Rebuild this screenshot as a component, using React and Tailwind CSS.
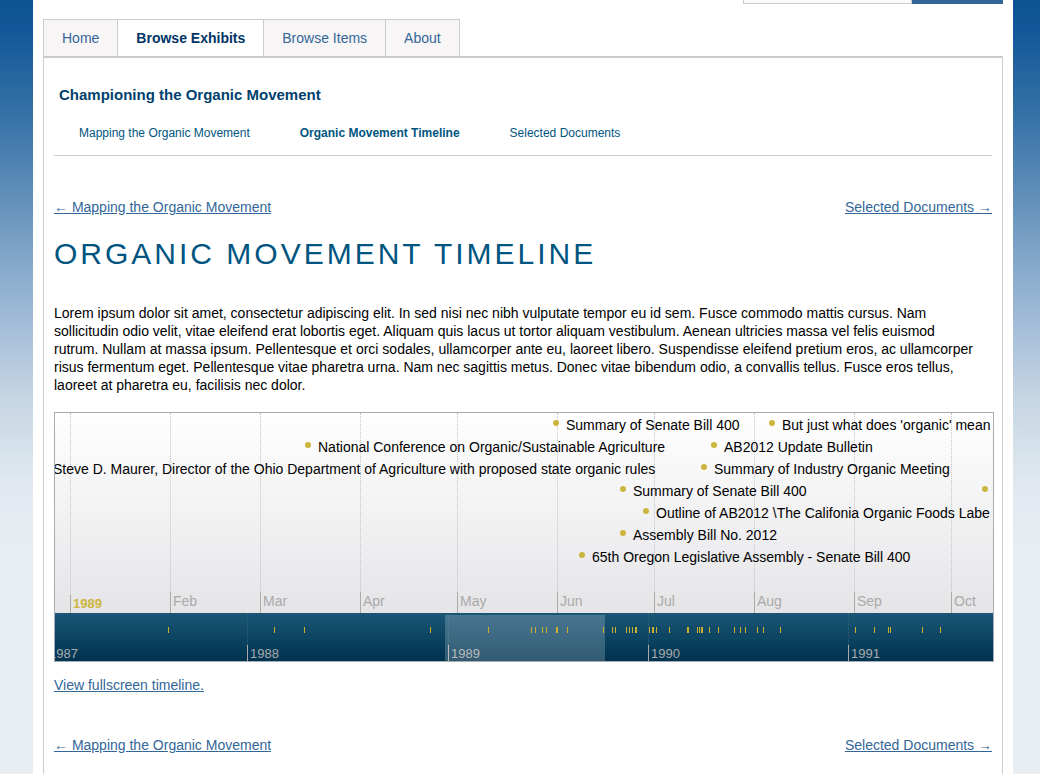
const tabs = [
  { label: "Home" },
  { label: "Browse Exhibits", active: true },
  { label: "Browse Items" },
  { label: "About" },
];

const sections = [
  { label: "Mapping the Organic Movement" },
  { label: "Organic Movement Timeline", active: true },
  { label: "Selected Documents" },
];

// Positions are pixel offsets along the time axis of each band.
const months = [
  { x: 115, label: "Feb" },
  { x: 205, label: "Mar" },
  { x: 305, label: "Apr" },
  { x: 402, label: "May" },
  { x: 502, label: "Jun" },
  { x: 599, label: "Jul" },
  { x: 699, label: "Aug" },
  { x: 799, label: "Sep" },
  { x: 896, label: "Oct" },
];

const years = [
  { x: -9, label: "1987" },
  { x: 192, label: "1988" },
  { x: 393, label: "1989" },
  { x: 593, label: "1990" },
  { x: 793, label: "1991" },
];

const events = [
  { x: 498, row: 0, label: "Summary of Senate Bill 400" },
  { x: 714, row: 0, label: "But just what does 'organic' mean" },
  { x: 250, row: 1, label: "National Conference on Organic/Sustainable Agriculture" },
  { x: 656, row: 1, label: "AB2012 Update Bulletin" },
  {
    x: -15,
    row: 2,
    label: "Steve D. Maurer, Director of the Ohio Department of Agriculture with proposed state organic rules",
  },
  { x: 646, row: 2, label: "Summary of Industry Organic Meeting" },
  { x: 565, row: 3, label: "Summary of Senate Bill 400" },
  { x: 927, row: 3, label: "" },
  { x: 588, row: 4, label: "Outline of AB2012 \\The Califonia Organic Foods Labe" },
  { x: 565, row: 5, label: "Assembly Bill No. 2012" },
  { x: 524, row: 6, label: "65th Oregon Legislative Assembly - Senate Bill 400" },
];

const ticks = [
  113, 219, 249, 375, 433, 476, 480, 487, 491, 501, 502, 512, 548, 557, 560,
  571, 574, 577, 580, 581, 594, 597, 598, 601, 614, 632, 633, 642, 644, 646,
  647, 654, 663, 679, 685, 690, 702, 708, 725, 800, 819, 833, 835, 867, 885,
];

const link = "text-[#336699] underline";

function SectionLinks() {
  return (
    <div className="flex justify-between leading-[18px]">
      <a href="#mapping" className={link}>← Mapping the Organic Movement</a>
      <a href="#documents" className={link}>Selected Documents →</a>
    </div>
  );
}

function Timeline() {
  return (
    <div className="box-content w-full overflow-hidden border border-[#a9a9b2] whitespace-nowrap">
      <div className="relative h-[200px] overflow-hidden bg-linear-to-b from-white to-[#e5e4e7]">
        <div className="absolute inset-y-0 left-[15px] border-l border-dotted border-[#c4c4c4]" />
        <div className="absolute bottom-0 left-[15px] h-[18px] border-l border-[#aaaaaa] pl-[2px] text-[13px] leading-[18px] font-bold text-[#ccb53d]">
          1989
        </div>
        {months.map((m) => (
          <div key={m.label}>
            <div className="absolute inset-y-0 border-l border-dotted border-[#c4c4c4]" style={{ left: m.x }} />
            <div
              className="absolute bottom-0 h-[21px] border-l border-[#aaaaaa] pl-[2px] leading-[18px] text-[#aaaaaa]"
              style={{ left: m.x }}
            >
              {m.label}
            </div>
          </div>
        ))}
        {events.map((e) => (
          <div
            key={e.x + "-" + e.row}
            className="absolute flex gap-[7px] leading-[18px]"
            style={{ left: e.x, top: 3 + e.row * 22 }}
          >
            <span className="mt-1 size-[6px] shrink-0 rounded-full bg-[#ccb53d]" />
            <span>{e.label}</span>
          </div>
        ))}
      </div>
      <div className="relative h-12 overflow-hidden bg-linear-to-b from-[#1b5676] to-[#003350]">
        {years.map((y) => (
          <div key={y.label}>
            <div className="absolute inset-y-0 border-l border-dotted border-[#345f78]" style={{ left: y.x }} />
            <div
              className="absolute bottom-0 h-4 border-l border-[#aaaaaa] pl-[2px] text-[13px] leading-[18px] text-[#aaaaaa]"
              style={{ left: y.x }}
            >
              {y.label}
            </div>
          </div>
        ))}
        <div className="absolute top-[2px] bottom-0 left-[390px] w-[160px] bg-white/20" />
        {ticks.map((x) => (
          <div key={x} className="absolute top-[14px] h-[6px] w-px bg-[#ccb02a]" style={{ left: x }} />
        ))}
      </div>
    </div>
  );
}

export default function App() {
  return (
    <div
      className="flex min-h-screen flex-col bg-[linear-gradient(to_bottom,#0c5492_0px,#13589a_30px,#2f6da3_100px,#5083b2_165px,#7ba2c6_245px,#a4bdd8_325px,#c6d6e3_400px,#d6e2ea_450px,#e5eaf3_500px,#e8edf1_550px,#e9eef2_774px)] pr-[27px] pl-[33px] text-sm text-black"
      style={{ fontFamily: '"Liberation Sans", Arial, sans-serif' }}
    >
      <div className="flex grow flex-col bg-white px-[10px]">
        <form className="flex h-1 items-end justify-end overflow-hidden" onSubmit={(e) => e.preventDefault()}>
          <input
            type="text"
            aria-label="Search"
            className="h-7 w-[169px] shrink-0 border border-[#cccccc] bg-[#fafafa] px-2"
          />
          <button type="submit" aria-label="Search" className="h-7 w-[91px] shrink-0 bg-[#336699]" />
        </form>

        <nav className="mt-[15px] flex" aria-label="Main">
          <ul className="flex border-t border-l border-[#cccccc]">
            {tabs.map((t) => (
              <li key={t.label} className="border-r border-[#cccccc]">
                <a
                  href="#tab"
                  className={
                    t.active
                      ? "block bg-white px-[18px] py-[9px] leading-[18px] font-bold text-[#003366]"
                      : "block bg-[#f7f5f6] px-[18px] py-[9px] leading-[18px] text-[#336699]"
                  }
                >
                  {t.label}
                </a>
              </li>
            ))}
          </ul>
        </nav>

        <main className="grow border-x border-t-2 border-[#cccccc] px-[10px] pt-7">
          <div className="border-b border-[#cccccc] pb-[13px]">
            <h2 className="px-[5px] text-[15px] leading-[18px] font-bold text-[#003f6e]">
              Championing the Organic Movement
            </h2>
            <ul className="mt-5 flex gap-[50px] px-[25px] text-xs leading-[18px]">
              {sections.map((s) => (
                <li key={s.label}>
                  <a href="#section" className={s.active ? "font-bold text-[#005580]" : "text-[#005580]"}>
                    {s.label}
                  </a>
                </li>
              ))}
            </ul>
          </div>

          <div className="mt-[42px]">
            <SectionLinks />
          </div>
          <h1 className="mt-5 text-[30px] leading-9 tracking-[3px] text-[#005580] uppercase">
            Organic Movement Timeline
          </h1>
          <p className="mt-8 mb-[18px] pr-[10px] leading-[18px]">
            Lorem ipsum dolor sit amet, consectetur adipiscing elit. In sed nisi nec nibh vulputate tempor eu id sem.
            Fusce commodo mattis cursus. Nam sollicitudin odio velit, vitae eleifend erat lobortis eget. Aliquam quis
            lacus ut tortor aliquam vestibulum. Aenean ultricies massa vel felis euismod rutrum. Nullam at massa ipsum.
            Pellentesque et orci sodales, ullamcorper ante eu, laoreet libero. Suspendisse eleifend pretium eros, ac
            ullamcorper risus fermentum eget. Pellentesque vitae pharetra urna. Nam nec sagittis metus. Donec vitae
            bibendum odio, a convallis tellus. Fusce eros tellus, laoreet at pharetra eu, facilisis nec dolor.
          </p>
          <Timeline />
          <p className="mt-[14px] mb-[42px] leading-[18px]">
            <a href="#fullscreen" className={link}>View fullscreen timeline.</a>
          </p>
          <SectionLinks />
        </main>
      </div>
    </div>
  );
}
